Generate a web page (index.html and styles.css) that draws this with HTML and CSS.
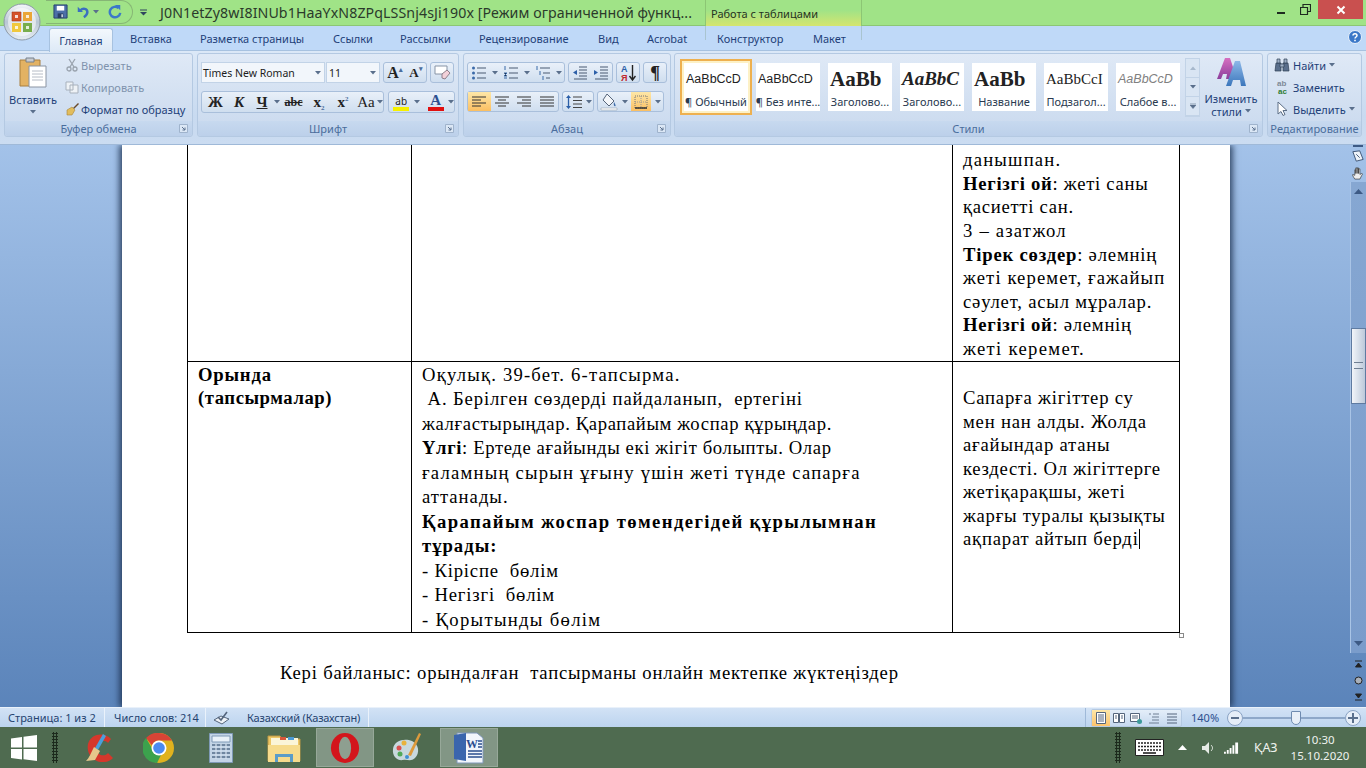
FILE: index.html
```html
<!DOCTYPE html>
<html lang="ru">
<head>
<meta charset="utf-8">
<title>Word</title>
<link rel="stylesheet" href="styles.css">
</head>
<body>
<svg class="defs" width="0" height="0">
  <defs>
    <linearGradient id="orbg" x1="0" y1="0" x2="0" y2="1"><stop offset="0" stop-color="#f4f7fa"/><stop offset=".5" stop-color="#b9c6d4"/><stop offset="1" stop-color="#e6edf3"/></linearGradient>
    <linearGradient id="aa1" x1="0" y1="0" x2="0" y2="1"><stop offset="0" stop-color="#d66fc0"/><stop offset="1" stop-color="#8c3f9c"/></linearGradient>
    <linearGradient id="aa2" x1="0" y1="0" x2="0" y2="1"><stop offset="0" stop-color="#8db8e8"/><stop offset="1" stop-color="#3c77bc"/></linearGradient>
    <symbol id="arrow" viewBox="0 0 6 4"><path d="M0 0h6L3 3.500z" fill="#5a6f8c"/></symbol>
    <symbol id="launcher" viewBox="0 0 9 9"><path d="M.5.5h8v8h-8z" fill="#dbe7f5" stroke="#9fb3cc"/><path d="M3 3l3 3M6 3.500V6H3.500" stroke="#5d7290" fill="none"/></symbol>
  </defs>
</svg>

<header class="titlebar">
  <svg class="orb" viewBox="0 0 38 38" width="38" height="38">
    <circle cx="19" cy="19" r="18" fill="url(#orbg)" stroke="#8d9aa8"/>
    <circle cx="19" cy="19" r="14" fill="#fff" opacity=".55"/>
    <path d="M9 9h9v9H9z" fill="#d4522a" stroke="#a63a1a" stroke-width=".6"/><path d="M20 9h9v9h-9z" fill="#eaa638"/><path d="M9 20h9v9H9z" fill="#f0c83c"/><path d="M20 20h9v9h-9z" fill="#78ad4c"/>
    <path d="M12 12h3v3h-3zM23 23h3v3h-3zM23 12h3v3h-3zM12 23h3v3h-3z" fill="#fff" opacity=".8"/>
  </svg>
  <div class="qat">
    <svg viewBox="0 0 16 16" width="15" height="15"><path d="M1 1h14v14H1z" fill="#4c6fa8" stroke="#26406e"/><path d="M4 2h8v5H4z" fill="#fff"/><path d="M5 10h6v5H5z" fill="#2a3f66"/><path d="M9 11h1.500v3H9z" fill="#dfe7f2"/></svg>
    <svg class="q-undo" viewBox="0 0 16 16" width="14" height="14"><path d="M2 2v6h6z" fill="#3b6fc0"/><path d="M5 6c3-3 8-2 8 2 0 2-1 4-4 6" fill="none" stroke="#3b6fc0" stroke-width="2.800"/></svg>
    <svg class="ar" width="6" height="4"><use href="#arrow"/></svg>
    <svg class="q-redo" viewBox="0 0 16 16" width="14" height="14"><path d="M12 3.500A6 6 0 1 0 14 9" fill="none" stroke="#3b79c9" stroke-width="2.800"/><path d="M8 0h6v6z" fill="#3b79c9"/></svg>
  </div>
  <svg class="qat-more" width="7" height="7" viewBox="0 0 7 7"><path d="M0 1h7" stroke="#30455f"/><path d="M0 3h7l-3.500 3.500z" fill="#30455f"/></svg>
  <div class="doc-title">J0N1etZy8wI8INUb1HaaYxN8ZPqLSSnj4sJi190x [Режим ограниченной функц...</div>
  <div class="ctx-title">Работа с таблицами</div>
  <div class="winbtns">
    <span class="wb"><svg width="10" height="10" viewBox="0 0 10 10"><path d="M1 8h8" stroke="#1e2a20" stroke-width="2"/></svg></span>
    <span class="wb"><svg width="11" height="11" viewBox="0 0 11 11"><path d="M.5 3.500h7v7h-7zM3 3V.5h7.500v7H8" fill="none" stroke="#1e2a20" stroke-width="1.200"/></svg></span>
    <span class="wb close"><svg width="10" height="10" viewBox="0 0 10 10"><path d="M1.500 1.500l7 7M8.500 1.500l-7 7" stroke="#fff" stroke-width="2"/></svg></span>
  </div>
</header>

<nav class="tabs">
  <span class="ctx-band"></span>
  <span class="tab active">Главная</span>
  <span class="tab t2">Вставка</span>
  <span class="tab t3">Разметка страницы</span>
  <span class="tab t4">Ссылки</span>
  <span class="tab t5">Рассылки</span>
  <span class="tab t6">Рецензирование</span>
  <span class="tab t7">Вид</span>
  <span class="tab t8">Acrobat</span>
  <span class="tab t9">Конструктор</span>
  <span class="tab t10">Макет</span>
  <svg class="help" viewBox="0 0 14 14" width="14" height="14"><circle cx="7" cy="7" r="6.500" fill="#3b78c8" stroke="#e8f0fa"/><path d="M5 5.500c0-2.500 4-2.500 4 0 0 1.500-2 1.500-2 3" fill="none" stroke="#fff" stroke-width="1.500"/><path d="M6.200 9.700h1.600v1.500H6.200z" fill="#fff"/></svg>
</nav>

<section class="ribbon">
  <div class="group g-clip">
    <div class="gbody clip-body">
      <div class="paste">
        <svg viewBox="0 0 28 32" width="28" height="32"><path d="M1 3h20v26H1z" fill="#e3b263" stroke="#a87f3f"/><path d="M7 1h8v4H7z" fill="#c9ccd1" stroke="#77808c"/><path d="M10 9h17v21H10z" fill="#fff" stroke="#8a94a3"/><path d="M13 14h11M13 17h11M13 20h11M13 23h11" stroke="#b6bcc6"/></svg>
        <span>Вставить</span>
        <svg class="ar" width="6" height="4"><use href="#arrow"/></svg>
      </div>
      <div class="clip-list">
        <div class="clip-item dim"><svg viewBox="0 0 14 14" width="14" height="14"><path d="M4 1l5 8M10 1L5 9" stroke="#9aa3ae" stroke-width="1.300"/><circle cx="4" cy="11" r="2" fill="none" stroke="#9aa3ae" stroke-width="1.300"/><circle cx="10" cy="11" r="2" fill="none" stroke="#9aa3ae" stroke-width="1.300"/></svg>Вырезать</div>
        <div class="clip-item dim"><svg viewBox="0 0 14 14" width="14" height="14"><path d="M1 2h7v8H1zM5 5h8v8H5z" fill="#eef2f6" stroke="#a8b1bc"/></svg>Копировать</div>
        <div class="clip-item"><svg viewBox="0 0 14 14" width="14" height="14"><path d="M8 6l5-5 1 1-5 5z" fill="#6a4a2a"/><path d="M2 8l5-3 3 3-3 5-5 0z" fill="#e2bd5d" stroke="#a8843a" stroke-width=".6"/></svg>Формат по образцу</div>
      </div>
    </div>
    <div class="gcap">Буфер обмена<svg class="launch" width="9" height="9"><use href="#launcher"/></svg></div>
  </div>

  <div class="group g-font">
    <div class="gbody stack">
      <div class="row">
        <div class="combo c-font"><span>Times New Roman</span><svg class="ar" width="6" height="4"><use href="#arrow"/></svg></div>
        <div class="combo c-size"><span>11</span><svg class="ar" width="6" height="4"><use href="#arrow"/></svg></div>
        <div class="box b-grow"><b class="serif big">A<sup>▴</sup></b><b class="serif small">A<sup>▾</sup></b></div>
        <div class="box b-clear"><svg viewBox="0 0 18 16" width="18" height="16"><path d="M2 1h12v8H2z" fill="#fff" stroke="#8794a6"/><path d="M9 9l5-4 3 3-5 6-3-1z" fill="#f2d0d8" stroke="#8f7f8a"/></svg></div>
      </div>
      <div class="row">
        <div class="box b-fmt">
          <b class="g serif w25 big2">Ж</b><b class="g serif w22 big2"><i>К</i></b><b class="g serif w24 big2"><u>Ч</u></b><svg class="ar" width="6" height="4"><use href="#arrow"/></svg>
          <span class="g serif strike w27">abc</span><b class="g serif w24 big2">x<sub>2</sub></b><b class="g serif w24 big2">x<sup>2</sup></b><span class="g serif w22 big2">Aa</span><svg class="ar" width="6" height="4"><use href="#arrow"/></svg>
        </div>
        <div class="box b-color">
          <span class="colorbtn"><span class="ab">ab</span><i class="bar yellow"></i></span><svg class="ar" width="6" height="4"><use href="#arrow"/></svg>
          <span class="colorbtn wide"><b class="serif a">A</b><i class="bar redbar"></i></span><svg class="ar" width="6" height="4"><use href="#arrow"/></svg>
        </div>
      </div>
    </div>
    <div class="gcap">Шрифт<svg class="launch" width="9" height="9"><use href="#launcher"/></svg></div>
  </div>

  <div class="group g-para">
    <div class="gbody stack">
      <div class="row tight">
        <div class="box b-lists">
          <svg viewBox="0 0 16 16" width="16" height="16"><path d="M6 3h9M6 8h9M6 13h9" stroke="#4a5a72" stroke-width="1.200"/><circle cx="2.500" cy="3" r="1.500" fill="#3b6aa8"/><circle cx="2.500" cy="8" r="1.500" fill="#3b6aa8"/><circle cx="2.500" cy="13" r="1.500" fill="#3b6aa8"/></svg><svg class="ar" width="6" height="4"><use href="#arrow"/></svg>
          <svg viewBox="0 0 16 16" width="16" height="16"><path d="M6 3h9M6 8h9M6 13h9" stroke="#4a5a72" stroke-width="1.200"/><path d="M2 1v4M1 8h3l-3 3h3M1 13h3" stroke="#3b6aa8"/></svg><svg class="ar" width="6" height="4"><use href="#arrow"/></svg>
          <svg viewBox="0 0 16 16" width="16" height="16"><path d="M5 3h10M8 8h7M11 13h4" stroke="#4a5a72" stroke-width="1.200"/><path d="M2 1v4M5 6v4M8 11v4" stroke="#3b6aa8"/></svg><svg class="ar" width="6" height="4"><use href="#arrow"/></svg>
        </div>
        <div class="box b-indent">
          <svg viewBox="0 0 16 16" width="16" height="16"><path d="M7 2h8M7 5h8M7 8h8M7 11h8M2 14h13" stroke="#4a5a72" stroke-width="1.200"/><path d="M5 5v5L1 7.500z" fill="#2c5fa8"/></svg>
          <svg viewBox="0 0 16 16" width="16" height="16"><path d="M7 2h8M7 5h8M7 8h8M7 11h8M2 14h13" stroke="#4a5a72" stroke-width="1.200"/><path d="M1 5v5l4-2.500z" fill="#2c5fa8"/></svg>
        </div>
        <div class="box b-one"><svg viewBox="0 0 16 18" width="16" height="18"><text x="1" y="8" class="svgt blue">A</text><text x="1" y="17" class="svgt redt">Я</text><path d="M12.500 1v14M9.500 12l3 4 3-4" fill="none" stroke="#222" stroke-width="1.400"/></svg></div>
        <div class="box b-one"><span class="pil">¶</span></div>
      </div>
      <div class="row tight">
        <div class="box b-align">
          <span class="al on"><svg viewBox="0 0 16 14" width="16" height="14"><path d="M1 2h14M1 5h9M1 8h14M1 11h9" stroke="#333" stroke-width="1.200"/></svg></span>
          <span class="al"><svg viewBox="0 0 16 14" width="16" height="14"><path d="M1 2h14M4 5h8M1 8h14M4 11h8" stroke="#333" stroke-width="1.200"/></svg></span>
          <span class="al"><svg viewBox="0 0 16 14" width="16" height="14"><path d="M1 2h14M6 5h9M1 8h14M6 11h9" stroke="#333" stroke-width="1.200"/></svg></span>
          <span class="al"><svg viewBox="0 0 16 14" width="16" height="14"><path d="M1 2h14M1 5h14M1 8h14M1 11h14" stroke="#333" stroke-width="1.200"/></svg></span>
        </div>
        <div class="box b-space"><svg viewBox="0 0 18 16" width="18" height="16"><path d="M3.500 3v10" stroke="#2c5fa8" stroke-width="1.300"/><path d="M1 4l2.500-3L6 4zM1 12l2.500 3L6 12z" fill="#2c5fa8"/><path d="M8 3h9M8 6.500h9M8 10h9M8 13.500h9" stroke="#444" stroke-width="1.100"/></svg><svg class="ar" width="6" height="4"><use href="#arrow"/></svg></div>
        <div class="box b-shade">
          <svg viewBox="0 0 18 18" width="18" height="18"><path d="M7 1l7 7-5 5-6-6z" fill="#f3f6fa" stroke="#56657a"/><path d="M14 9c1 2 2 3 1.500 4s-2.500 0-1.500-4z" fill="#3b6aa8"/><path d="M1 15h16v2H1z" fill="#fff" stroke="#8a94a3" stroke-width=".5"/></svg><svg class="ar" width="6" height="4"><use href="#arrow"/></svg>
          <span class="al on bd"><svg viewBox="0 0 14 14" width="14" height="14"><path d="M1 1h12v12H1z" fill="none" stroke="#777" stroke-dasharray="1 1"/><path d="M1 7h12M7 1v12" stroke="#999" stroke-dasharray="1 1"/><path d="M1 13h12" stroke="#333" stroke-width="1.500"/></svg></span><svg class="ar" width="6" height="4"><use href="#arrow"/></svg>
        </div>
      </div>
    </div>
    <div class="gcap">Абзац<svg class="launch" width="9" height="9"><use href="#launcher"/></svg></div>
  </div>

  <div class="group g-styles">
    <div class="gbody styles-body">
      <div class="gallery">
        <div class="style sel"><span class="sample s-calibri">AaBbCcD</span><span class="sname">¶ Обычный</span></div>
        <div class="style"><span class="sample s-calibri">AaBbCcD</span><span class="sname">¶ Без инте...</span></div>
        <div class="style"><span class="sample s-head">AaBb</span><span class="sname">Заголово...</span></div>
        <div class="style"><span class="sample s-head2">AaBbC</span><span class="sname">Заголово...</span></div>
        <div class="style"><span class="sample s-head">AaBb</span><span class="sname">Название</span></div>
        <div class="style"><span class="sample s-sub">AaBbCcI</span><span class="sname">Подзагол...</span></div>
        <div class="style"><span class="sample s-weak">AaBbCcD</span><span class="sname">Слабое в...</span></div>
      </div>
      <div class="gal-scroll">
        <span class="gs"><svg width="6" height="4" viewBox="0 0 6 4"><path d="M0 4h6L3 .5z" fill="#a7b8cc"/></svg></span>
        <span class="gs"><svg width="6" height="4"><use href="#arrow"/></svg></span>
        <span class="gs"><svg width="6" height="6" viewBox="0 0 6 6"><path d="M0 0h6M0 2h6L3 5.500z" stroke="#5a6f8c" stroke-width=".6" fill="#5a6f8c"/></svg></span>
      </div>
      <div class="change-styles">
        <svg viewBox="0 0 30 30" width="32" height="30"><path d="M1 22L9 1h5l4 12-5 9h-3l1-5H7l-2 5z" fill="url(#aa1)"/><path d="M10 29l9-25h5l6 25h-5l-1-6h-7l-2 6z" fill="url(#aa2)"/></svg>
        <span>Изменить</span>
        <span>стили <svg class="ar" width="6" height="4"><use href="#arrow"/></svg></span>
      </div>
    </div>
    <div class="gcap">Стили<svg class="launch" width="9" height="9"><use href="#launcher"/></svg></div>
  </div>

  <div class="group g-edit">
    <div class="gbody edit-body">
      <div class="clip-item"><svg viewBox="0 0 16 14" width="16" height="14"><path d="M2 5h5v8H1zM9 5h5l1 8H9z" fill="#5a6f8c" stroke="#2f3f55" stroke-width=".7"/><path d="M3 1h3v4H3zM10 1h3v4h-3zM6 6h4v3H6z" fill="#9fb0c6" stroke="#2f3f55" stroke-width=".7"/></svg><span>Найти</span><svg class="ar" width="6" height="4"><use href="#arrow"/></svg></div>
      <div class="clip-item"><svg viewBox="0 0 16 16" width="16" height="16"><text x="3" y="7" class="svgt2 gray">ab</text><text x="4" y="15" class="svgt2 green">ac</text></svg><span>Заменить</span></div>
      <div class="clip-item"><svg viewBox="0 0 16 16" width="16" height="16"><path d="M4 1v12l3-2.500 2 4 2-1-2-4h4z" fill="#fff" stroke="#5d6f86"/></svg><span>Выделить</span><svg class="ar" width="6" height="4"><use href="#arrow"/></svg></div>
    </div>
    <div class="gcap">Редактирование</div>
  </div>
</section>

<main class="workspace">
  <article class="page">
    <table class="doc">
      <colgroup><col class="col1"><col class="col2"><col class="col3"></colgroup>
      <tr class="r1">
        <td></td>
        <td></td>
        <td class="c3 bottom">
          <div class="ls12">данышпан.</div>
          <div class="ls7"><b>Негізгі ой</b>: жеті саны</div>
          <div class="ls7">қасиетті сан.</div>
          <div class="ls12">3 – азатжол</div>
          <div><b>Тірек сөздер</b>: әлемнің</div>
          <div class="ls11">жеті керемет, ғажайып</div>
          <div>сәулет, асыл мұралар.</div>
          <div class="ls7"><b>Негізгі ой</b>: әлемнің</div>
          <div class="ls13">жеті керемет.</div>
        </td>
      </tr>
      <tr class="r2">
        <td class="c1">
          <div><b>Орында</b></div>
          <div class="ls5"><b>(тапсырмалар)</b></div>
        </td>
        <td class="c2">
          <div class="ls12">Оқулық. 39-бет. 6-тапсырма.</div>
          <div class="ls9">&nbsp;А. Берілген сөздерді пайдаланып,&nbsp; ертегіні</div>
          <div class="ls6">жалғастырыңдар. Қарапайым жоспар құрыңдар.</div>
          <div class="ls6"><b>Үлгі</b>: Ертеде ағайынды екі жігіт болыпты. Олар</div>
          <div class="ls12">ғаламның сырын ұғыну үшін жеті түнде сапарға</div>
          <div class="ls10">аттанады.</div>
          <div class="ls14"><b>Қарапайым жоспар төмендегідей құрылымнан</b></div>
          <div class="ls10"><b>тұрады:</b></div>
          <div>- Кіріспе&nbsp; бөлім</div>
          <div>- Негізгі&nbsp; бөлім</div>
          <div class="ls13">- Қорытынды бөлім</div>
        </td>
        <td class="c3 tail">
          <div>&nbsp;</div>
          <div>Сапарға жігіттер су</div>
          <div>мен нан алды. Жолда</div>
          <div>ағайындар атаны</div>
          <div class="ls7">кездесті. Ол жігіттерге</div>
          <div>жетіқарақшы, жеті</div>
          <div class="ls7">жарғы туралы қызықты</div>
          <div>ақпарат айтып берді<span class="caret"></span></div>
        </td>
      </tr>
    </table>
    <span class="resize"></span>
    <p class="feedback">Кері байланыс: орындалған&nbsp; тапсырманы онлайн мектепке жүктеңіздер</p>
  </article>
  <aside class="vscroll">
    <span class="split"></span>
    <svg class="vs-i first" viewBox="0 0 14 14" width="12" height="12"><path d="M1 2l8-1 4 10-8 2z" fill="#eef3f9" stroke="#2f4668"/><path d="M5 5l4 4" stroke="#2f4668"/></svg>
    <svg class="vs-i" viewBox="0 0 14 14" width="13" height="13"><path d="M3 13C1 10 0 8 1 8l2 1V3h1v4V1h1.500v6V1H7v6V2h1.500v6l2-1c1 0 1 1 0 2l-2 4z" fill="#eee" stroke="#333" stroke-width=".7"/></svg>
    <div class="track">
      <svg class="tr-up" width="9" height="5" viewBox="0 0 9 5"><path d="M0 5h9L4.500 0z" fill="#3d5a85"/></svg>
      <div class="thumb"><span></span></div>
      <svg class="tr-down" width="9" height="5" viewBox="0 0 9 5"><path d="M0 0h9L4.500 5z" fill="#3d5a85"/></svg>
    </div>
    <svg class="vs-n" width="7" height="8" viewBox="0 0 7 8"><path d="M0 1h7M.5 7h6L3.500 3z" stroke="#222" fill="#222"/></svg>
    <svg class="vs-n" width="9" height="9" viewBox="0 0 9 9"><circle cx="4.500" cy="4.500" r="3.500" fill="#a9b0ba" stroke="#222"/></svg>
    <svg class="vs-n" width="7" height="8" viewBox="0 0 7 8"><path d="M0 7h7M.5 1h6L3.500 5z" stroke="#222" fill="#222"/></svg>
  </aside>
</main>

<footer class="status">
  <span class="st s-page">Страница: 1 из 2</span>
  <span class="st s-words">Число слов: 214</span>
  <span class="st s-check"><svg viewBox="0 0 18 14" width="18" height="14"><path d="M1 9l7-4 8 3-7 5z" fill="#eef2f7" stroke="#54657c"/><path d="M5 6l3 3 6-8" fill="none" stroke="#54657c" stroke-width="1.600"/></svg></span>
  <span class="st s-lang">Казахский (Казахстан)</span>
  <div class="st-right">
    <div class="views">
      <span class="v on"><svg viewBox="0 0 12 12" width="12" height="12"><path d="M1.500.5h9v11h-9z" fill="#fff" stroke="#54657c"/><path d="M3 3h6M3 5h6M3 7h6M3 9h6" stroke="#54657c"/></svg></span>
      <span class="v"><svg viewBox="0 0 12 12" width="12" height="12"><path d="M.5 1.500h5v9h-5zM6.500 1.500h5v9h-5z" fill="#fff" stroke="#54657c"/><path d="M2 4h2M2 6h2M8 4h2M8 6h2" stroke="#54657c"/></svg></span>
      <span class="v"><svg viewBox="0 0 12 12" width="12" height="12"><path d="M.5 1.500h9v8h-9z" fill="#fff" stroke="#54657c"/><path d="M2 4h6M2 6h6" stroke="#54657c"/><circle cx="9.500" cy="9.500" r="2.500" fill="#3d9a9a"/></svg></span>
      <span class="v"><svg viewBox="0 0 12 12" width="12" height="12"><path d="M1 2h2M5 2h6M4 5h7M4 8h7M1 11h10" stroke="#6f7f93"/></svg></span>
      <span class="v"><svg viewBox="0 0 12 12" width="12" height="12"><path d="M1 2h10M1 5h10M1 8h10M1 11h10" stroke="#54657c"/></svg></span>
    </div>
    <span class="zoom">140%</span>
    <span class="zb"><svg width="8" height="8" viewBox="0 0 8 8"><path d="M0 4h8" stroke="#5a6f8c" stroke-width="2"/></svg></span>
    <div class="slider"><span class="knob"></span></div>
    <span class="zb"><svg width="10" height="10" viewBox="0 0 10 10"><path d="M0 5h10M5 0v10" stroke="#5a6f8c" stroke-width="2"/></svg></span>
  </div>
</footer>

<footer class="taskbar">
  <svg class="start" viewBox="0 0 28 28" width="28" height="28"><path d="M1 4.500l11-1.500v10.500H1zM13.500 2.800L27 1v12.500H13.500zM1 15h11v10.500L1 24zM13.500 15H27v12l-13.500-1.800z" fill="#fff"/></svg>
  <span class="grip"></span>
  <span class="task t-cc"><svg viewBox="0 0 34 34" width="34" height="34"><path d="M30 8C24 1 10 2 7 13c-2 10 6 19 16 18 4 0 7-2 9-4l-5-5c-3 4-11 3-11-4 0-8 8-10 11-6z" fill="#d6372b"/><path d="M22 3l3 2-8 14-3-2z" fill="#4aa0dc"/><path d="M13 16l6 4-5 9-9 1c3-3 5-8 8-14z" fill="#e6c78b"/></svg></span>
  <span class="task t-ch"><svg viewBox="0 0 32 32" width="32" height="32"><circle cx="16" cy="16" r="15" fill="#e0b21e"/><path d="M16 1a15 15 0 0 1 13 7.500H16a7.500 7.500 0 0 0-7 5L3 6A15 15 0 0 1 16 1z" fill="#d84436"/><path d="M3 6l7 12a7.500 7.500 0 0 0 8 5l-4 7.900A15 15 0 0 1 3 6z" fill="#3ca24d"/><circle cx="16" cy="16" r="7.500" fill="#fff"/><circle cx="16" cy="16" r="5.800" fill="#4c8bf0"/></svg></span>
  <span class="task t-ca"><svg viewBox="0 0 24 30" width="24" height="30"><path d="M.5.5h23v29H.5z" fill="#c3d4e6" stroke="#7e99b6"/><path d="M3 3h18v6H3z" fill="#e9f1f9" stroke="#7e99b6"/><path d="M3 12h18M3 16h18M3 20h18M3 24h18" stroke="#6f86a0" stroke-width="2.200"/><path d="M7 11v15M12 11v15M17 11v15" stroke="#d6e2ef" stroke-width="1.200"/></svg></span>
  <span class="task t-ex"><svg viewBox="0 0 34 30" width="34" height="30"><path d="M1 3h12l3 3h17v22H1z" fill="#edc766" stroke="#bb9745"/><path d="M4 5h27v8H4z" fill="#fbf5d8"/><path d="M13 4h6v3h-6z" fill="#d9573b"/><path d="M21 4h6v3h-6z" fill="#4c9ad4"/><path d="M1 12h32v17H1z" fill="#f6db8c"/><path d="M8 21h18v8h-3v-5H11v5H8z" fill="#5a9cc8"/></svg></span>
  <span class="task t-op on"><svg viewBox="0 0 32 34" width="30" height="32"><ellipse cx="16" cy="17" rx="15" ry="16" fill="#d3151c"/><ellipse cx="16" cy="17" rx="6.500" ry="12" fill="#8e9f90"/></svg></span>
  <span class="task t-pa"><svg viewBox="0 0 32 32" width="32" height="32"><path d="M2 17C3 8 14 6 21 9c7 3 8 12 3 17-4 4-8 1-12 2-5 1-11-3-10-11z" fill="#c8d8dd"/><circle cx="8" cy="16" r="2.500" fill="#d94e4e"/><circle cx="13" cy="11" r="2.500" fill="#e8b23c"/><circle cx="9" cy="22" r="2.500" fill="#4fa857"/><circle cx="16" cy="25" r="2" fill="#3f8fd2"/><path d="M28 1l2 1-10 22-3-1z" fill="#dd9a3c"/></svg></span>
  <span class="task t-wd on"><svg viewBox="0 0 32 32" width="32" height="32"><path d="M4 1h20l6 5v25H4z" fill="#f2f5fb" stroke="#7f96b8"/><path d="M1 3l12-2v28L1 27z" fill="#3a65ad"/><text x="13" y="16" class="svgw">W</text><path d="M25 9h4M25 12h4M25 15h4M15 19h14M15 22h14M15 25h14" stroke="#2b4d8f" stroke-width="1.600"/></svg></span>
  <div class="tray">
    <span class="grip"></span>
    <span class="kbd"><svg viewBox="0 0 29 17" width="29" height="17"><path d="M.5.5h28v16H.5z" fill="#fff" stroke="#222"/><path d="M3 4h23M3 7.500h23M3 11h23" stroke="#222" stroke-width="1.600" stroke-dasharray="2 1"/><path d="M8 14h13" stroke="#222" stroke-width="1.600"/></svg></span>
    <svg class="tri" width="9" height="5" viewBox="0 0 9 5"><path d="M0 5h9L4.500 0z" fill="#fff"/></svg>
    <svg class="snd" viewBox="0 0 14 14" width="14" height="14"><path d="M1 5h3l4-4v12L4 9H1z" fill="#e6ebe6"/><path d="M10 4c2 2 2 4 0 6" fill="none" stroke="#e6ebe6"/></svg>
    <svg class="net" viewBox="0 0 16 12" width="15" height="12"><path d="M0 10h2v2H0zM3 8h2v4H3zM6 6h2v6H6zM9 3h2v9H9zM12 0h3v12h-3z" fill="#fff"/></svg>
    <span class="lang">ҚАЗ</span>
    <span class="clock"><span>10:30</span><span>15.10.2020</span></span>
  </div>
</footer>
</body>
</html>
```

FILE: styles.css
```css
* { box-sizing: border-box; }
html, body { margin: 0; height: 100%; }
body {
  width: 1366px; height: 768px; overflow: hidden;
  display: flex; flex-direction: column;
  font-family: "Noto Sans", "Open Sans", sans-serif;
  font-size: 11px; color: #15428b; background: #bfd9f5;
}
.defs { position: absolute; }
svg { display: block; flex: none; }
.serif { font-family: "Liberation Serif", serif; }
.ar { flex: none; }

/* title bar */
.titlebar {
  height: 26px; flex: none; display: flex; align-items: center;
  background: #a0e387; border-bottom: 1px solid #8cc674; position: relative; color: #26331f;
  padding-left: 46px;
}
.orb { position: absolute; left: 3px; top: 3px; z-index: 3; }
.qat {
  display: flex; align-items: center; gap: 6px; height: 24px; width: 87px; margin-top: -2px;
  padding-left: 7px;
  border: 1px solid #86b675; border-left: 0; border-radius: 0 12px 12px 0;
}
.q-undo { margin-left: 2px; margin-right: -3px; }
.q-redo { margin-left: 3px; }
.qat-more { margin-left: 7px; }
.doc-title {
  margin-left: 13px; width: 530px; font-size: 14.2px; letter-spacing: .09px; white-space: nowrap; color: #2b3a2b;
}
.ctx-title {
  margin-left: 15px; width: 157px; height: 26px; padding-left: 5px; line-height: 28px; font-size: 11px; color: #26331f;
  background: linear-gradient(#a0e387 40%, #d5e56f);
  border-left: 1px solid #8cc674; border-right: 1px solid #8cc674;
}
.winbtns { margin-left: auto; margin-right: 3px; display: flex; height: 19px; align-self: flex-start; }
.wb { width: 25px; display: flex; align-items: center; justify-content: center; }
.wb.close { background: #c9504f; width: 45px; }

/* tabs */
.tabs {
  height: 24px; flex: none; display: flex; align-items: center; position: relative;
  background: #bfd9f8; font-size: 11px; color: #1e3f78;
}
.ctx-band {
  position: absolute; left: 705px; top: 0; width: 157px; height: 14px;
  border-left: 1px solid #a9c4d0; border-right: 1px solid #a9c4d0;
}
.tab { position: absolute; top: 5px; white-space: nowrap; }
.tab.active {
  left: 49px; top: 2px; width: 64px; height: 24px; text-align: center; line-height: 23px; z-index: 1;
  background: linear-gradient(#f3f8fd, #dde9f6); border: 1px solid #a7c2e0; border-bottom: 0; border-radius: 3px 3px 0 0;
}
.t2 { left: 130px; } .t3 { left: 200px; } .t4 { left: 333px; } .t5 { left: 400px; }
.t6 { left: 479px; } .t7 { left: 598px; } .t8 { left: 647px; } .t9 { left: 717px; } .t10 { left: 813px; }
.help { position: absolute; left: 1348px; top: 4px; }

/* ribbon */
.ribbon {
  height: 95px; flex: none; display: flex; gap: 4px; padding: 2px 4px 0;
  background: linear-gradient(#dbe8f7, #c8daf0 70%, #cbdcf1);
  border-top: 1px solid #a7c2e0; border-bottom: 1px solid #9fb9d8;
}
.group {
  height: 84px; display: flex; flex-direction: column; flex: none;
  background: linear-gradient(#dfe9f6, #c9d9ee); border: 1px solid #b4c9e2; border-radius: 3px;
}
.g-clip { width: 189px; } .g-font { width: 262px; } .g-para { width: 208px; }
.g-styles { width: 589px; margin-left: -1px; } .g-edit { width: 95px; }
.gbody { height: 67px; flex: none; }
.gcap {
  height: 15px; flex: none; position: relative; text-align: center; line-height: 16px;
  background: linear-gradient(#c7d9ef, #bcd0ea); color: #4a6d9c; font-size: 11px; border-radius: 0 0 3px 3px;
}
.launch { position: absolute; right: 4px; top: 3px; }
.clip-body { display: flex; }
.paste { width: 56px; display: flex; flex-direction: column; align-items: center; padding-top: 3px; color: #1e3f78; }
.paste span { margin-top: 3px; line-height: 15px; }
.paste .ar { margin-top: 3px; }
.clip-list { margin-left: 4px; display: flex; flex-direction: column; }
.clip-item { display: flex; align-items: center; gap: 2px; height: 22px; color: #1e3f78; white-space: nowrap; }
.dim { color: #8093ad; }

.stack { display: flex; flex-direction: column; gap: 7px; padding: 8px 0 0 3px; }
.row { display: flex; height: 22px; gap: 3px; }
.combo {
  height: 21px; background: #f2f6fb; border: 1px solid #c2d3e7; display: flex; align-items: center; justify-content: space-between;
  padding: 0 3px 0 1px; color: #1c1c1c; font-size: 10.5px;
}
.c-font { width: 124px; }
.c-size { width: 54px; margin-left: -2px; padding-left: 2px; }
.box {
  height: 21px; display: flex; align-items: center; justify-content: space-around;
  background: linear-gradient(#e9f0f9, #cfdeef); border: 1px solid #a9bfdb; border-radius: 3px; color: #222;
}
.b-grow { width: 44px; } .b-clear { width: 24px; }
.b-fmt { width: 183px; height: 22px; justify-content: flex-start; padding-left: 1px; font-size: 13px; }
.b-color { width: 67px; height: 22px; margin-left: 1px; justify-content: flex-start; padding-left: 3px; gap: 3px; }
.big { font-size: 16px; } .small { font-size: 13px; }
.big2 { font-size: 15px; }
.box sup { font-size: 7px; color: #4a6d9c; vertical-align: 6px; line-height: 0; }
.box sub { font-size: 7px; line-height: 0; vertical-align: -3px; color: #4a6d9c; }
.g { display: block; text-align: center; line-height: 20px; }
.w22 { width: 22px; } .w24 { width: 24px; } .w25 { width: 25px; } .w27 { width: 27px; }
.strike { text-decoration: line-through; font-size: 12px; font-weight: bold; }
.colorbtn { display: flex; flex-direction: column; align-items: center; width: 19px; height: 18px; justify-content: flex-end; }
.colorbtn.wide { margin-left: 4px; }
.ab { font-size: 10px; line-height: 12px; color: #222; }
.a { font-size: 15px; line-height: 13px; color: #2c4f8f; }
.bar { display: block; width: 16px; height: 4px; }
.yellow { background: #f6f000; } .redbar { background: #e01010; }
.tight { gap: 3px; }
.b-lists { width: 98px; } .b-indent { width: 45px; } .b-one { width: 24px; }
.pil { font: bold 18px/20px "Liberation Serif", serif; color: #222; }
.b-align { width: 92px; justify-content: flex-start; }
.al { width: 23px; height: 19px; display: flex; align-items: center; justify-content: center; }
.al.on { background: linear-gradient(#fde7a8, #fbbf62); }
.bd { width: 20px; }
.b-space { width: 32px; }
.b-shade { width: 67px; }
.svgt { font: bold 9px "Liberation Sans", sans-serif; }
.blue { fill: #2c5fa8; } .redt { fill: #c0272d; }
.svgt2 { font: bold 8px "Liberation Sans", sans-serif; }
.gray { fill: #7f8a97; } .green { fill: #2e7d32; }
.svgw { font: bold 12px "Liberation Serif", serif; fill: #2b4d8f; }

.styles-body { display: flex; padding: 4px 0 0 9px; }
.gallery { display: flex; gap: 8px; padding-top: 5px; width: 501px; flex: none; }
.style {
  width: 64px; height: 48px; background: #fff; flex: none; display: flex; flex-direction: column; align-items: center;
  color: #222;
}
.style.sel { outline: 2px solid #eeb04f; outline-offset: 2px; box-shadow: 0 0 0 2px #fdf1c6; }
.sample { height: 31px; width: 62px; white-space: nowrap; text-align: left; padding-left: 1px; display: block; }
.s-calibri { font: 12.5px/32px "Liberation Sans", sans-serif; }
.s-head { font: bold 21px/32px "Liberation Serif", serif; }
.s-head2 { font: italic bold 19px/32px "Liberation Serif", serif; }
.s-sub { font: 15px/32px "Liberation Serif", serif; }
.s-weak { font: italic 12.5px/32px "Liberation Sans", sans-serif; color: #808080; }
.sname { font-size: 11px; line-height: 15px; white-space: nowrap; color: #2a3a50; }
.gal-scroll { width: 15px; height: 59px; display: flex; flex-direction: column; background: #d9e5f3; border: 1px solid #c2d3e7; flex: none; }
.gs { flex: 1; display: flex; align-items: center; justify-content: center; border-bottom: 1px solid #c2d3e7; }
.change-styles { width: 62px; flex: none; margin-top: -4px; display: flex; flex-direction: column; align-items: center; color: #1e3f78; line-height: 13px; }
.change-styles svg:first-child { margin-bottom: 5px; margin-top: 3px; }
.change-styles span { display: flex; align-items: center; gap: 3px; }
.edit-body { padding: 0 0 0 6px; display: flex; flex-direction: column; }
.edit-body .clip-item { gap: 3px; }

/* workspace */
.workspace {
  flex: 1; min-height: 0; display: flex; overflow: hidden;
  background: linear-gradient(#a3c2e9, #5b84ba);
  padding-left: 122px; position: relative;
}
.page {
  width: 1108px; flex: none; height: 562px; background: #fff; padding-left: 65px;
  box-shadow: 3px 0 6px rgba(30,50,80,.75), -3px 0 6px rgba(30,50,80,.75); position: relative;
}
.doc {
  border-collapse: collapse; table-layout: fixed; width: 992px; margin-top: -1px;
  font: 18.67px/23.6px "Liberation Serif", serif; color: #000; white-space: nowrap; letter-spacing: .8px;
}
.col1 { width: 224px; } .col2 { width: 541px; } .col3 { width: 227px; }
.doc td { border-left: 1px solid #000; border-right: 1px solid #000; padding: 0 10px; vertical-align: top; }
.r1 td { height: 217px; border-bottom: 1px solid #000; }
.r1 .bottom { vertical-align: bottom; padding-bottom: 0; }
.r2 td { height: 271px; border-bottom: 1px solid #000; }
.doc .c1, .doc .c3 { padding-top: 1px; }
.doc .c2 { line-height: 24.5px; padding-top: 1px; }
.doc .tail { line-height: 23.5px; }
.ls5 { letter-spacing: .55px; } .ls6 { letter-spacing: .62px; } .ls7 { letter-spacing: .72px; } .ls9 { letter-spacing: .87px; }
.ls10 { letter-spacing: 1px; } .ls11 { letter-spacing: 1.1px; } .ls12 { letter-spacing: 1.2px; } .ls13 { letter-spacing: 1.32px; }
.ls14 { letter-spacing: 1.4px; }
.caret { display: inline-block; width: 1px; height: 20px; background: #000; vertical-align: -4px; }
.resize { position: absolute; left: 1057px; top: 488px; width: 5px; height: 5px; border: 1px solid #8a8a8a; background: #fff; }
.feedback { margin: 28px 0 0 93px; font: 18.67px/24px "Liberation Serif", serif; color: #000; letter-spacing: .79px; white-space: nowrap; }

.vscroll { width: 16px; margin-left: auto; display: flex; flex-direction: column; align-items: center; height: 562px; }
.split { width: 10px; height: 2px; background: #3d5a85; flex: none; }
.vs-i { margin-top: 5px; }
.vs-i.first { margin-top: 3px; }
.track {
  width: 16px; height: 471px; flex: none; margin: 2px 0 -1px; background: linear-gradient(#86a7d2, #7a9ccb); display: flex; flex-direction: column; align-items: center;
  border-left: 1px solid #a9c4e6; position: relative;
}
.tr-up { margin-top: 7px; }
.tr-down { margin-top: auto; margin-bottom: 7px; }
.thumb {
  position: absolute; left: 0; top: 146px; width: 15px; height: 76px;
  background: linear-gradient(90deg, #f2f5f9, #bcc9da); border: 1px solid #5f7ba1; display: flex; align-items: flex-end; justify-content: center; padding-bottom: 34px;
}
.thumb span { width: 9px; height: 7px; border-top: 1px solid #6f7f93; border-bottom: 1px solid #6f7f93; }
.vs-n { margin-top: 8px; }

/* status */
.status {
  height: 20px; flex: none; display: flex; align-items: center;
  background: linear-gradient(#d2e2f5, #bcd4ef); color: #25436f; font-size: 11px;
  border-top: 1px solid #e9f1fa;
}
.st { height: 20px; display: flex; align-items: center; border-right: 1px solid #eaf2fb; white-space: nowrap; }
.s-page { width: 105px; padding-left: 8px; } .s-words { width: 101px; padding-left: 9px; } .s-check { width: 35px; padding-left: 7px; border-right: 0; }
.s-lang { width: 128px; padding-left: 6px; letter-spacing: -.18px; }
.st-right { margin-left: auto; display: flex; align-items: center; height: 20px; border-left: 1px solid #9fb9d8; padding-left: 5px; }
.views { display: flex; width: 91px; height: 18px; background: linear-gradient(#e4eef9, #c6d9ef); border: 1px solid #b4c9e2; border-radius: 2px; }
.v { width: 18px; display: flex; align-items: center; justify-content: center; }
.v.on { background: linear-gradient(#fde7a8, #fbc36d); }
.zoom { margin-left: 9px; width: 36px; color: #2c4f8f; font-size: 11px; }
.zb { width: 16px; height: 16px; border-radius: 50%; border: 1px solid #8aa3c4; background: #e6eef8; display: flex; align-items: center; justify-content: center; }
.slider { width: 102px; height: 2px; background: #8ea8c9; position: relative; }
.knob { position: absolute; left: 48px; top: -6px; width: 10px; height: 14px; background: #e8eff8; border: 1px solid #6f8bb0; border-radius: 1px 1px 5px 5px; }
.st-right .zb:last-child { margin-right: 5px; }

/* taskbar */
.taskbar { height: 41px; flex: none; display: flex; align-items: center; background: #4f6b50; color: #eef2ee; padding-left: 10px; }
.start { margin-right: 14px; }
.grip { width: 6px; height: 31px; background-image: radial-gradient(circle, #1c2a1c 1px, transparent 1.2px); background-size: 3px 3px; flex: none; }
.task { width: 57px; height: 39px; display: flex; align-items: center; justify-content: center; flex: none; border: 1px solid transparent; }
.task.on { background: #829685; border-color: #97a899; }
.t-cc { margin-left: 10px; width: 60px; }
.t-ch { width: 62px; }
.t-ca { width: 61px; }
.t-ex { width: 65px; }
.t-op { width: 58px; }
.t-pa { width: 66px; }
.t-wd { width: 58px; }
.tray { margin-left: auto; display: flex; align-items: center; height: 41px; }
.kbd { margin-left: 14px; margin-right: 14px; }
.tri { margin-right: 14px; }
.snd { margin-right: 9px; }
.net { margin-right: 15px; }
.lang { font-size: 12.5px; width: 22px; white-space: nowrap; }
.clock { display: flex; flex-direction: column; align-items: center; width: 58px; margin-left: 15px; margin-right: 17px; font-size: 11.5px; line-height: 16px; }
```
